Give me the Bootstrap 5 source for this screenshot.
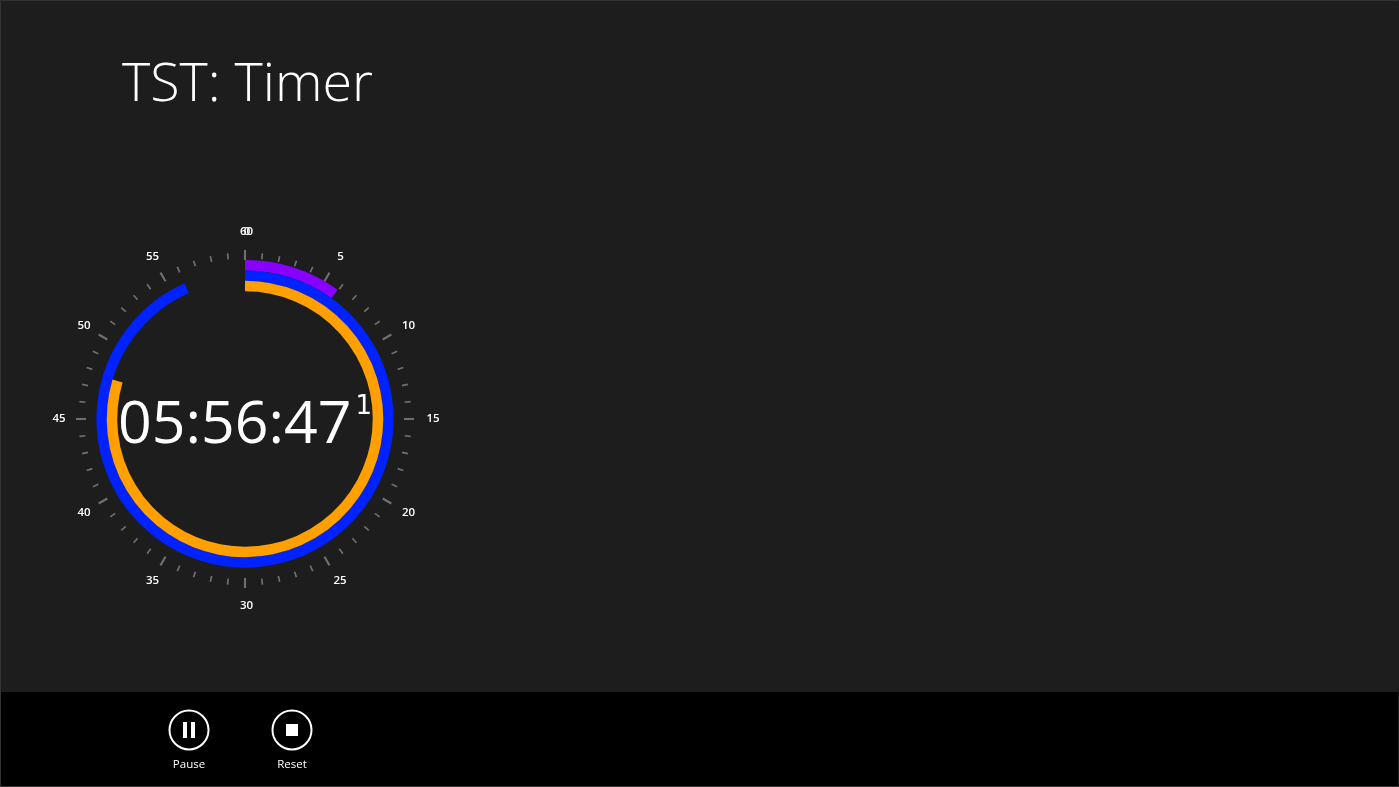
<!DOCTYPE html>
<html lang="en">
<head>
<meta charset="utf-8">
<title>TST: Timer</title>
<link rel="stylesheet" href="https://cdn.jsdelivr.net/npm/bootstrap@5.3.0/dist/css/bootstrap.min.css">
<style>
html, body { height: 100%; margin: 0; overflow: hidden; }
body { background: #1d1d1d; font-family: "Open Sans", "Noto Sans", sans-serif; color: #fff; }
.app-frame { height: 787px; border: 1px solid #333; border-right-color: #1d1d1d; }
.app-title { font-family: "Open Sans", sans-serif; font-weight: 300; font-size: 53.8px; line-height: 72px; margin: 43px 0 0 121px; color: #fff; }
.dial-wrap { margin: 103px 0 0 44px; width: 400px; height: 400px; will-change: transform; }
.dial-tick { stroke: #707070; stroke-width: 1.7; }
.dial-major { stroke-width: 2.1; }
.dial-label { font-size: 11.5px; font-weight: 600; fill: #fff; text-anchor: middle; dominant-baseline: central; }
.dial-time { font-size: 59px; fill: #fff; }
.dial-frac { font-family: "DejaVu Sans", sans-serif; font-size: 26px; fill: #fff; }
.app-bar { background: #000; height: 94px; padding-left: 138px; gap: 3px; will-change: transform; }
.bar-btn { width: 100px; background: none; border: 0; color: #fff; padding: 17px 0 0; font-size: 11.5px; line-height: 16px; }
.bar-btn svg { display: block; margin: 0 auto 5px; }
</style>
</head>
<body>
<div class="app-frame d-flex flex-column">
  <main class="flex-grow-1">
    <h1 class="app-title">TST: Timer</h1>
    <div class="dial-wrap">
      <svg id="dial" width="400" height="400" viewBox="45 219 400 400">
        <g id="ticks"></g>
        <g fill="none" stroke-width="10.5">
          <path id="arc-h" stroke="#8800ff"/>
          <path id="arc-m" stroke="#0022ff"/>
          <path id="arc-s" stroke="#ffa000"/>
        </g>
        <text class="dial-label" x="247" y="230">0</text>
        <text class="dial-label" x="246.5" y="230">60</text>
        <text class="dial-label" x="340.5" y="255.5">5</text>
        <text class="dial-label" x="408.5" y="324">10</text>
        <text class="dial-label" x="433" y="417.5">15</text>
        <text class="dial-label" x="408.5" y="511">20</text>
        <text class="dial-label" x="340" y="579">25</text>
        <text class="dial-label" x="246.5" y="604.5">30</text>
        <text class="dial-label" x="152.5" y="579">35</text>
        <text class="dial-label" x="84" y="511">40</text>
        <text class="dial-label" x="59" y="417.5">45</text>
        <text class="dial-label" x="84" y="324">50</text>
        <text class="dial-label" x="152.5" y="255.5">55</text>
        <text class="dial-time" x="118" y="442.5">05:56:47</text>
        <text class="dial-frac" x="355.5" y="413.5">1</text>
      </svg>
    </div>
  </main>
  <footer class="app-bar d-flex align-items-start">
    <button class="bar-btn" type="button">
      <svg width="42" height="42" viewBox="0 0 42 42"><circle cx="21" cy="21" r="19.5" fill="none" stroke="#fff" stroke-width="2"/><rect x="15" y="13" width="4" height="16" fill="#fff"/><rect x="23" y="13" width="4" height="16" fill="#fff"/></svg>
      Pause
    </button>
    <button class="bar-btn" type="button">
      <svg width="42" height="42" viewBox="0 0 42 42"><circle cx="21" cy="21" r="19.5" fill="none" stroke="#fff" stroke-width="2"/><rect x="15" y="15" width="12" height="12" fill="#fff"/></svg>
      Reset
    </button>
  </footer>
</div>
<script src="https://cdn.jsdelivr.net/npm/bootstrap@5.3.0/dist/js/bootstrap.bundle.min.js"></script>
<script>
var cx = 245, cy = 419, NS = "http://www.w3.org/2000/svg";
function pt(r, deg) { var a = deg * Math.PI / 180; return [cx + r * Math.sin(a), cy - r * Math.cos(a)]; }
var g = document.getElementById("ticks");
for (var i = 0; i < 60; i++) {
  var major = i % 5 === 0, p1 = pt(major ? 169 : 166.5, i * 6), p2 = pt(major ? 159 : 160.5, i * 6);
  var l = document.createElementNS(NS, "line");
  l.setAttribute("x1", p1[0]); l.setAttribute("y1", p1[1]);
  l.setAttribute("x2", p2[0]); l.setAttribute("y2", p2[1]);
  l.setAttribute("class", major ? "dial-tick dial-major" : "dial-tick");
  g.appendChild(l);
}
function arc(id, r, deg) {
  var e = pt(r, deg);
  document.getElementById(id).setAttribute("d", "M" + cx + " " + (cy - r) + "A" + r + " " + r + " 0 " + (deg > 180 ? 1 : 0) + " 1 " + e[0] + " " + e[1]);
}
arc("arc-h", 153.7, 35.6);
arc("arc-m", 143.3, 336);
arc("arc-s", 133, 286.6);
</script>
</body>
</html>
